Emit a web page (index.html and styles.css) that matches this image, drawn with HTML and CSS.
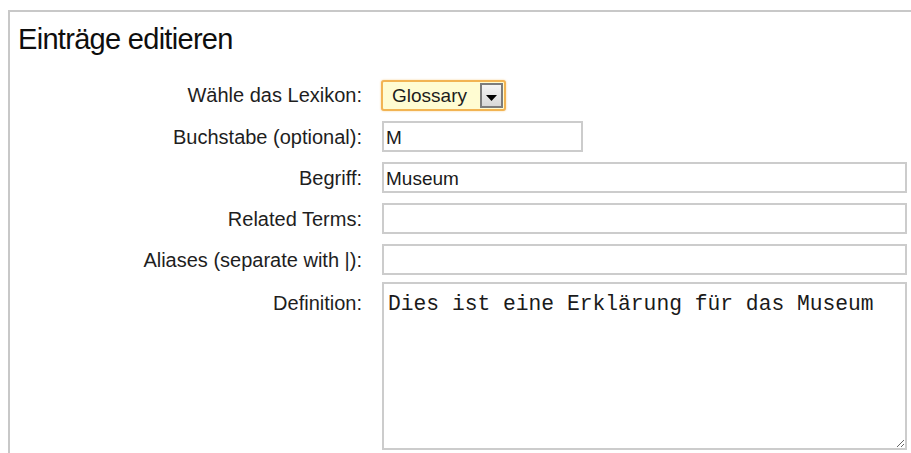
FILE: index.html
```html
<!DOCTYPE html>
<html lang="de">
<head>
<meta charset="utf-8">
<title>Einträge editieren</title>
<link rel="stylesheet" href="styles.css">
</head>
<body>
<div class="panel">
  <h2 class="panel-title">Einträge editieren</h2>
  <form class="entry-form">
    <label class="field-label field-label--select">Wähle das Lexikon:</label>
    <div class="field">
      <div class="fake-select">
        <span class="fake-select__value">Glossary</span>
        <span class="fake-select__button">
          <svg width="11" height="6" viewBox="0 0 11 6"><path d="M0 0H11L5.5 6Z" fill="#000"/></svg>
        </span>
      </div>
    </div>

    <label class="field-label">Buchstabe (optional):</label>
    <div class="field"><input class="text-input text-input--short" type="text" value="M"></div>

    <label class="field-label">Begriff:</label>
    <div class="field"><input class="text-input" type="text" value="Museum"></div>

    <label class="field-label">Related Terms:</label>
    <div class="field"><input class="text-input" type="text" value=""></div>

    <label class="field-label">Aliases (separate with |):</label>
    <div class="field"><input class="text-input" type="text" value=""></div>

    <label class="field-label field-label--top">Definition:</label>
    <div class="field field--area"><textarea class="text-area">Dies ist eine Erklärung für das Museum</textarea></div>
  </form>
</div>
</body>
</html>
```

FILE: styles.css
```css
html, body {
  margin: 0;
  padding: 0;
  background: #ffffff;
  overflow: hidden;
}

body {
  padding: 10px 0 0 8px;
  font-family: "Liberation Sans", Arial, sans-serif;
  color: #1e1e1e;
}

.panel {
  width: 940px;
  height: 443px;
  border-top: 2px solid #c8c8c8;
  border-left: 2px solid #c8c8c8;
  padding: 11px 0 0 0;
  box-sizing: border-box;
}

.panel-title {
  margin: 0 0 0 8px;
  font-size: 29px;
  font-weight: normal;
  letter-spacing: -0.7px;
  line-height: 32px;
  color: #0e0e0e;
}

.entry-form {
  display: grid;
  grid-template-columns: 352px 525px;
  column-gap: 20px;
  row-gap: 10px;
  margin-top: 25px;
  align-items: center;
}

.field-label {
  text-align: right;
  font-size: 20px;
  color: #1e1e1e;
  line-height: 23px;
  padding-top: 2px;
}

.field-label--select {
  padding-top: 0;
}

.field-label--top {
  align-self: start;
  padding-top: 7px;
}

.field {
  display: flex;
}

.field--area {
  margin-top: -3px;
}

/* Lexicon chooser */
.fake-select {
  display: flex;
  align-items: center;
  width: 125px;
  height: 31px;
  margin-left: -1px;
  box-sizing: border-box;
  border: 2px solid #f2b453;
  border-radius: 3px;
  background: #fffcd2;
  box-shadow: 0 0 2px rgba(240, 170, 60, 0.6);
  padding: 0 1px 0 9px;
}

.fake-select__value {
  flex: 1;
  font-size: 19px;
  color: #1c1c1c;
}

.fake-select__button {
  width: 23px;
  height: 25px;
  box-sizing: border-box;
  border: 2px solid #7c7c7c;
  background: linear-gradient(#f4f4f4, #d8d8d8);
  display: flex;
  align-items: center;
  justify-content: center;
  padding-top: 4px;
}

/* Text inputs */
.text-input {
  width: 525px;
  height: 31px;
  box-sizing: border-box;
  border: 2px solid #cccccc;
  padding: 2px 2px 0 2px;
  font-family: "Liberation Sans", Arial, sans-serif;
  font-size: 19px;
  color: #1a1a1a;
  background: #fff;
  outline: none;
}

.text-input--short {
  width: 201px;
}

.text-area {
  width: 525px;
  height: 168px;
  box-sizing: border-box;
  border: 2px solid #cccccc;
  padding: 8px 4px 6px;
  font-family: "Liberation Mono", "Courier New", monospace;
  font-size: 21.3px;
  line-height: 24px;
  color: #1a1a1a;
  background: #fff;
  outline: none;
}
```
